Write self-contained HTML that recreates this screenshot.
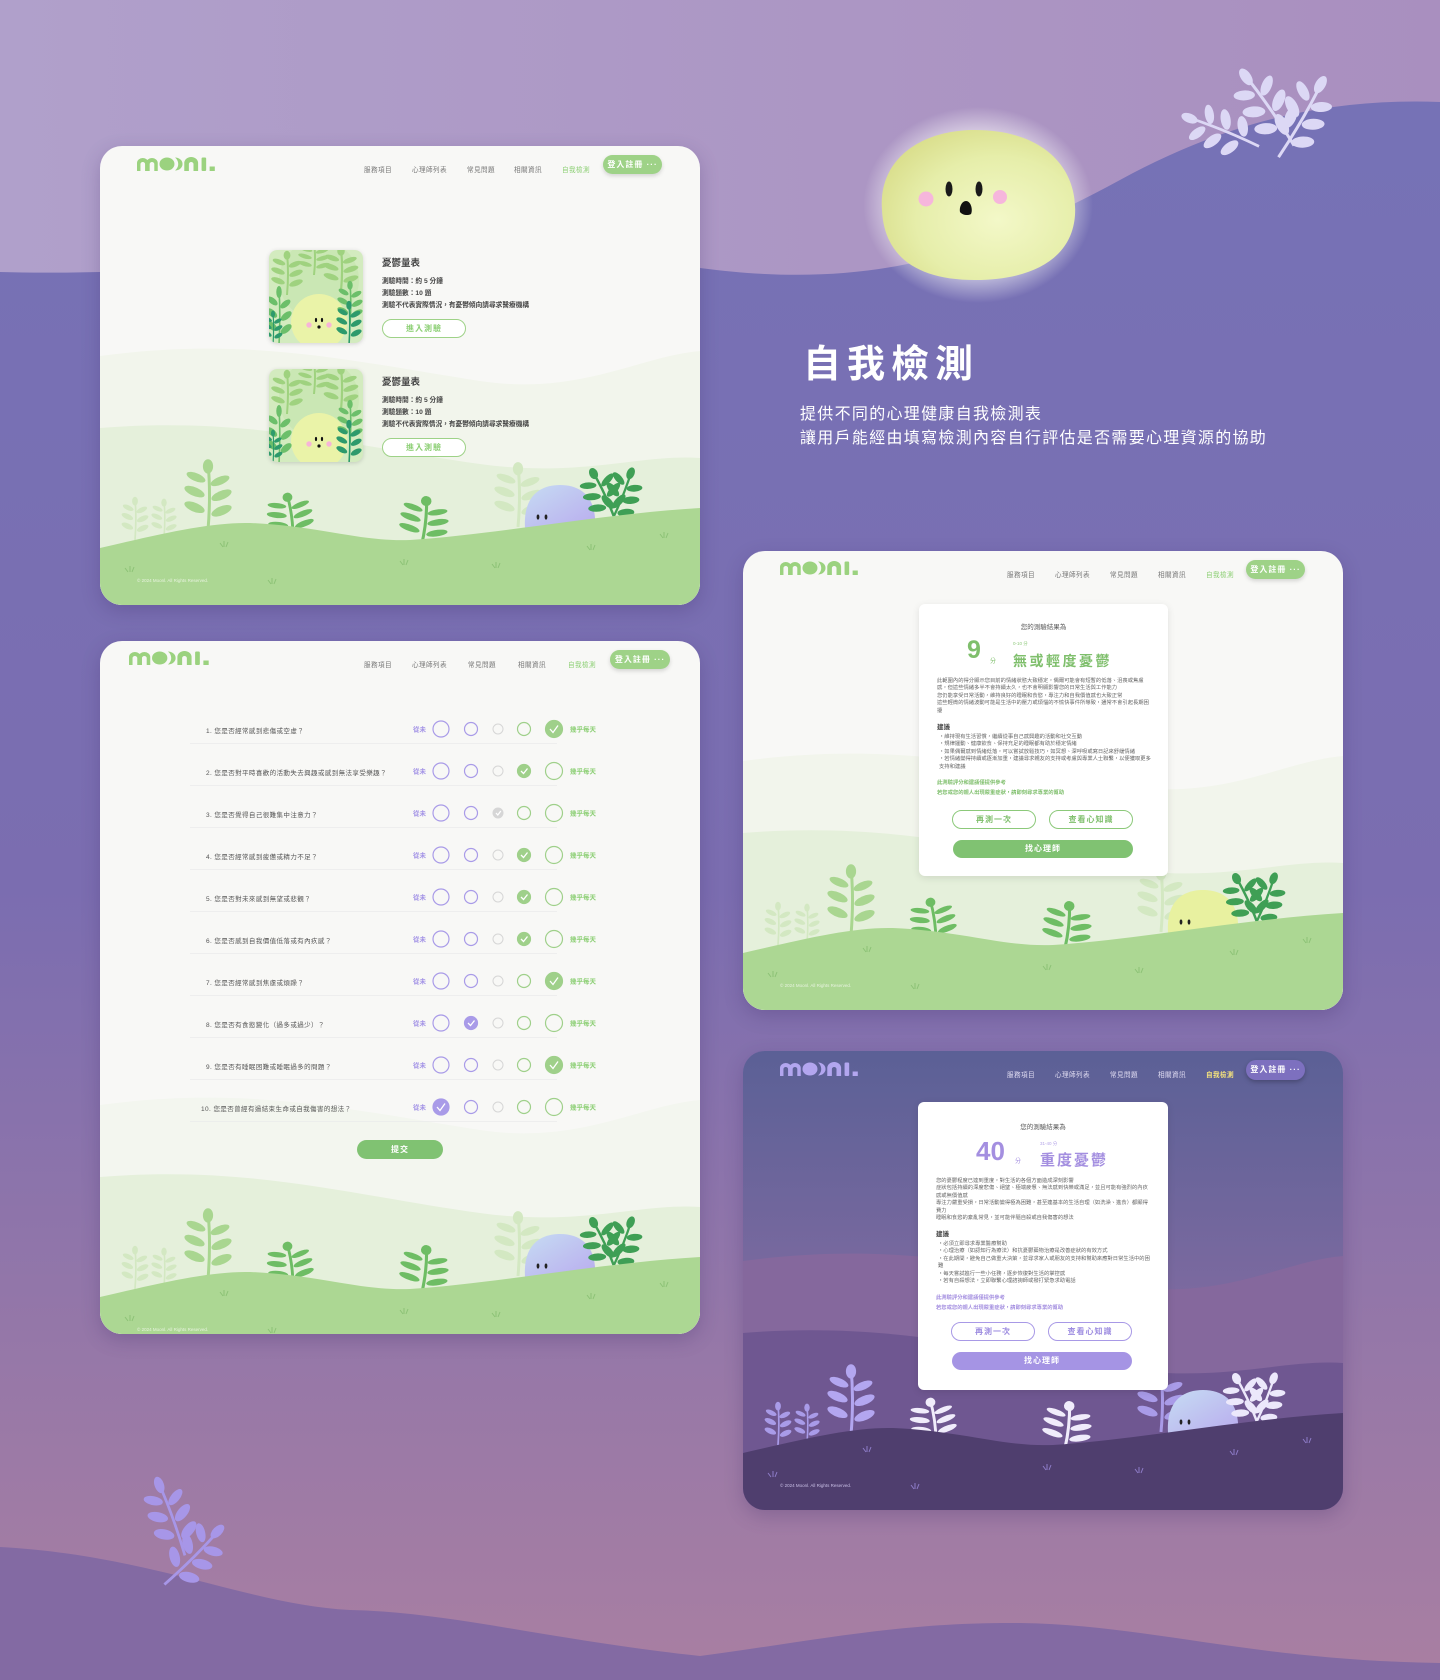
<!DOCTYPE html>
<html><head><meta charset="utf-8"><style>
*{margin:0;padding:0;box-sizing:border-box}
body{width:1440px;height:1680px;position:relative;overflow:hidden;font-family:"Liberation Sans","Noto Sans CJK TC",sans-serif;background:#7a70b2}
.abs{position:absolute}
.card{position:absolute;width:600px;border-radius:22px;overflow:hidden;background:#f8f8f6;box-shadow:0 6px 18px rgba(60,40,100,.25)}
.nav{position:absolute;top:18px;font-size:6.6px;color:#777;letter-spacing:.4px}
.btn{position:absolute;border-radius:12px;font-size:8px;font-weight:bold;color:#fff;text-align:center;letter-spacing:1px}
.q{position:absolute;left:106px;font-size:6.5px;color:#555;letter-spacing:.4px}
.box{position:absolute;background:#fff;border-radius:6px;box-shadow:0 2px 8px rgba(0,0,0,.1)}
.p{position:absolute;font-size:5.3px;line-height:7.4px;color:#666}
.ob{position:absolute;border:1.3px solid;border-radius:11px;font-size:8px;font-weight:bold;text-align:center;letter-spacing:1px;background:#fff}
.scene{position:absolute;left:0}
.g1{--w1:#f2f5ec;--w2:#e5f0db;--g:#acd793;--p1:#d3e8c2;--p2:#a9d690;--p3:#6ebd64;--p4:#3f9f55;--bl:url(#blobg);--tf:#e8f3df;--gr:#8cc276}
.g3{--w1:#f2f5ec;--w2:#e5f0db;--g:#acd793;--p1:#d3e8c2;--p2:#a9d690;--p3:#6ebd64;--p4:#3f9f55;--bl:#e8f1a0;--tf:#e8f3df;--gr:#8cc276}
.g4{--w1:#85689d;--w2:#6f5791;--g:#4f3e6e;--p1:#a99be8;--p2:#b3a6f0;--p3:#f0ecfb;--p4:#ece8fb;--bl:url(#blobg);--tf:#c9bfe6;--gr:#8e7cc8}
</style></head><body>
<svg width="0" height="0" style="position:absolute">
<defs>
<symbol id="sp" viewBox="0 0 40 60" preserveAspectRatio="none">
<path d="M20 60 Q22 30 20 4" stroke="currentColor" stroke-width="2" fill="none"/>
<g fill="currentColor">
<ellipse cx="20" cy="7" rx="3.4" ry="6"/>
<ellipse cx="12" cy="16" rx="3.2" ry="7" transform="rotate(-60 12 16)"/>
<ellipse cx="28" cy="19" rx="3.2" ry="7" transform="rotate(60 28 19)"/>
<ellipse cx="11" cy="28" rx="3.5" ry="7.5" transform="rotate(-60 11 28)"/>
<ellipse cx="29" cy="31" rx="3.5" ry="7.5" transform="rotate(60 29 31)"/>
<ellipse cx="11" cy="41" rx="3.6" ry="7.5" transform="rotate(-60 11 41)"/>
<ellipse cx="29" cy="44" rx="3.6" ry="7.5" transform="rotate(60 29 44)"/>
</g></symbol>
<symbol id="logo" viewBox="0 0 72 14" preserveAspectRatio="none">
<g fill="currentColor">
<path d="M0 14V6a5 5 0 0 1 10 0v8h-3V7a2 2 0 0 0-4 0v7zM8 14V6a5 5 0 0 1 10 0v8h-3V7a2 2 0 0 0-4 0v7z"/>
<circle cx="26" cy="7" r="6.5"/>
<path d="M33 0.5a6.5 6.5 0 0 1 0 13a9 9 0 0 0 0-13z"/>
<path d="M41 14V6a6 6 0 0 1 12 0v8h-4V7a2 2 0 0 0-4 0v7z"/>
<rect x="56" y="0.5" width="4" height="13.5" rx="1"/>
<rect x="63" y="9.5" width="4.5" height="4.5"/>
</g></symbol>
<linearGradient id="blobg" x1="0" y1="0" x2="1" y2="1"><stop offset="0" stop-color="#c6dcf3"/><stop offset="1" stop-color="#b9acee"/></linearGradient>
<symbol id="scene" viewBox="0 0 600 270">
<path d="M0 20 C150 0 250 25 380 45 C480 60 540 20 600 15 L600 270 L0 270Z" style="fill:var(--w1)"/>
<path d="M0 92 C150 80 250 110 380 128 C480 142 540 118 600 122 L600 270 L0 270Z" style="fill:var(--w2)"/>
<g style="color:var(--p1)"><use href="#sp" x="18" y="160" width="34" height="44"/><use href="#sp" x="48" y="162" width="32" height="40"/><use href="#sp" x="388" y="125" width="60" height="66"/></g>
<g style="color:var(--p2)"><use href="#sp" x="78" y="122" width="60" height="72"/></g>
<g style="color:var(--p3)"><use href="#sp" x="0" y="0" width="58" height="46" transform="translate(158 160) rotate(-8)"/><use href="#sp" x="0" y="0" width="62" height="50" transform="translate(296 156) rotate(6)"/></g>
<path d="M425 192 C423 160 440 149 460 149 C482 149 497 162 495 192Z" style="fill:var(--bl)"/>
<ellipse cx="438" cy="181" rx="1.4" ry="2.6" fill="#222"/><ellipse cx="446" cy="181" rx="1.4" ry="2.6" fill="#222"/>
<g style="color:var(--p4)"><use href="#sp" x="0" y="0" width="50" height="58" transform="translate(468 142) rotate(-25)"/><use href="#sp" x="0" y="0" width="46" height="62" transform="translate(512 122) rotate(22)"/></g>
<path d="M0 212 C60 198 110 186 150 187 C220 190 260 206 310 204 C400 198 500 178 600 172 L600 270 L0 270Z" style="fill:var(--g)"/>
<g style="stroke:var(--gr)" stroke-width="1" fill="none"><path d="M25 232l3 4M30 230v6M34 231l-2 5M168 244l3 4M172 242v6M176 243l-2 5M120 207l3 4M124 205v6M128 206l-2 5M300 225l3 4M304 223v6M308 224l-2 5M392 228l3 4M396 226v6M400 227l-2 5M487 210l3 4M491 208v6M495 209l-2 5M560 198l3 4M564 196v6M568 197l-2 5"/></g>
<text x="37" y="246" font-size="4.5" style="fill:var(--tf)" font-family="Liberation Sans">© 2024 Moonl. All Rights Reserved.</text>
</symbol>
<g id="thumb">
<rect width="94" height="93" rx="8" fill="#d3ebbf"/>
<circle cx="50" cy="30" r="40" fill="#c4e4ad" opacity=".6"/>
<circle cx="50" cy="72" r="28" fill="#eaf3a8"/>
<g color="#9fd27f"><use href="#sp" x="-2" y="0" width="40" height="45"/><use href="#sp" x="50" y="-4" width="44" height="45"/><use href="#sp" x="25" y="-10" width="40" height="35"/></g>
<g color="#6cbf6a"><use href="#sp" x="-6" y="35" width="32" height="60"/><use href="#sp" x="65" y="30" width="32" height="45"/></g>
<g color="#2d9a6c"><use href="#sp" x="64" y="50" width="32" height="45"/><use href="#sp" x="-8" y="60" width="24" height="35"/></g>
<circle cx="40" cy="75" r="2.7" fill="#f7b5d8"/><circle cx="60" cy="75" r="2.7" fill="#f7b5d8"/>
<ellipse cx="47" cy="70" rx="1.1" ry="2.1" fill="#111"/><ellipse cx="53" cy="70" rx="1.1" ry="2.1" fill="#111"/><circle cx="50" cy="77" r="1.6" fill="#111"/>
</g>
</defs></svg>

<!-- background -->
<svg class="abs" style="left:0;top:0" width="1440" height="1680">
<defs>
<linearGradient id="bgt" x1="0" y1="0" x2="1" y2="0"><stop offset="0" stop-color="#b0a0cb"/><stop offset="1" stop-color="#a98fbf"/></linearGradient>
<linearGradient id="bgm" x1="0" y1="0" x2="0" y2="1"><stop offset="0" stop-color="#7672b6"/><stop offset=".5" stop-color="#7b6db0"/><stop offset="1" stop-color="#a97fa2"/></linearGradient>
<radialGradient id="glow"><stop offset=".62" stop-color="#fff" stop-opacity=".75"/><stop offset="1" stop-color="#fff" stop-opacity="0"/></radialGradient>
<radialGradient id="moon" cx=".6" cy=".6" r=".7"><stop offset="0" stop-color="#f3f8c8"/><stop offset=".6" stop-color="#e6eeaa"/><stop offset="1" stop-color="#d8dc88"/></radialGradient>
</defs>
<rect width="1440" height="1680" fill="url(#bgt)"/>
<path d="M0 272 C200 278 480 240 700 268 C880 292 990 250 1120 180 C1230 120 1330 98 1440 102 L1440 1680 L0 1680Z" fill="url(#bgm)"/>
<path d="M0 1547 C150 1555 250 1605 350 1610 C450 1612 550 1640 700 1656 C820 1640 900 1622 1020 1623 C1150 1625 1250 1660 1440 1663 L1440 1680 L0 1680Z" fill="#836aa3"/>
<ellipse cx="978" cy="205" rx="115" ry="98" fill="url(#glow)"/>
<path d="M882 210 C878 160 920 130 975 130 C1040 130 1078 165 1075 215 C1072 260 1030 280 975 280 C915 280 884 255 882 210Z" fill="url(#moon)"/>
<ellipse cx="949" cy="189" rx="3.5" ry="7.5" fill="#1a1a1a"/>
<ellipse cx="979" cy="189" rx="3.5" ry="7.5" fill="#1a1a1a"/>
<path d="M966 201 C971 201 973 210 971 214 C968 216 962 215 960 212 C959 207 962 201 966 201Z" fill="#111"/>
<circle cx="926" cy="199" r="7.5" fill="#f6b6dc"/>
<circle cx="1000" cy="197" r="7" fill="#f6b6dc"/>
<g color="#dcd8f5">
<use href="#sp" width="60" height="95" transform="translate(1215 85) rotate(-35)"/>
<use href="#sp" width="60" height="95" transform="translate(1300 60) rotate(30)"/>
<use href="#sp" width="55" height="85" transform="translate(1170 140) rotate(-68)"/>
</g>
<g color="#a796e8">
<use href="#sp" width="55" height="85" transform="translate(130 1485) rotate(-20)"/>
<use href="#sp" width="55" height="85" transform="translate(205 1505) rotate(45)"/>
</g>
</svg>

<div class="abs" style="left:803px;top:333px;font-size:38px;font-weight:bold;color:#fff;letter-spacing:6px">自我檢測</div>
<div class="abs" style="left:800px;top:403px;font-size:16px;color:#fff;letter-spacing:1.3px;line-height:24px">提供不同的心理健康自我檢測表<br>讓用戶能經由填寫檢測內容自行評估是否需要心理資源的協助</div>

<!-- CARD 1 -->
<div class="card" style="left:100px;top:146px;height:459px">
<svg class="scene g1" style="top:190px" width="600" height="270"><use href="#scene" width="600" height="270"/></svg>
<svg class="abs" style="left:37px;top:11px;color:#9bd27f" width="83" height="14"><use href="#logo" width="83" height="14"/></svg>
<div class="nav" style="left:264px">服務項目</div><div class="nav" style="left:312px">心理師列表</div><div class="nav" style="left:367px">常見問題</div><div class="nav" style="left:414px">相關資訊</div><div class="nav" style="left:462px;color:#8ccf74">自我檢測</div>
<div class="btn" style="left:503px;top:9px;width:59px;height:19px;line-height:19px;background:#9ed287;box-shadow:0 2px 4px rgba(0,0,0,.15)">登入註冊 ···</div>

<svg class="abs" style="left:169px;top:104px;filter:drop-shadow(0 1px 2px rgba(0,0,0,.15))" width="94" height="93"><defs><clipPath id="tc1"><rect width="94" height="93" rx="8"/></clipPath></defs><g clip-path="url(#tc1)"><use href="#thumb"/></g></svg>
<div class="abs" style="left:282px;top:109px;font-size:9.5px;font-weight:bold;color:#444">憂鬱量表</div>
<div class="abs" style="left:282px;top:130px;font-size:6.7px;font-weight:bold;color:#444;line-height:11.8px">測驗時間：約 5 分鐘<br>測驗題數：10 題<br>測驗不代表實際情況，有憂鬱傾向請尋求醫療機構</div>
<div class="ob" style="left:282px;top:173px;width:84px;height:19px;line-height:17px;border-color:#9ed287;color:#8ccf74">進入測驗</div>

<svg class="abs" style="left:169px;top:223px;filter:drop-shadow(0 1px 2px rgba(0,0,0,.15))" width="94" height="93"><defs><clipPath id="tc2"><rect width="94" height="93" rx="8"/></clipPath></defs><g clip-path="url(#tc2)"><use href="#thumb"/></g></svg>
<div class="abs" style="left:282px;top:228px;font-size:9.5px;font-weight:bold;color:#444">憂鬱量表</div>
<div class="abs" style="left:282px;top:249px;font-size:6.7px;font-weight:bold;color:#444;line-height:11.8px">測驗時間：約 5 分鐘<br>測驗題數：10 題<br>測驗不代表實際情況，有憂鬱傾向請尋求醫療機構</div>
<div class="ob" style="left:282px;top:292px;width:84px;height:19px;line-height:17px;border-color:#9ed287;color:#8ccf74">進入測驗</div>
</div>

<!-- CARD 2 -->
<div class="card" style="left:100px;top:641px;height:693px">
<svg class="scene g1" style="top:444px;--w1:#f3f6ef" width="600" height="270"><use href="#scene" width="600" height="270"/></svg>
<svg class="abs" style="left:29px;top:10px;color:#9bd27f" width="85" height="14"><use href="#logo" width="85" height="14"/></svg>
<div class="nav" style="left:264px">服務項目</div><div class="nav" style="left:312px">心理師列表</div><div class="nav" style="left:368px">常見問題</div><div class="nav" style="left:418px">相關資訊</div><div class="nav" style="left:468px;color:#8ccf74">自我檢測</div>
<div class="btn" style="left:510px;top:9px;width:60px;height:19px;line-height:19px;background:#9ed287;box-shadow:0 2px 4px rgba(0,0,0,.15)">登入註冊 ···</div>

<div class="q" style="top:84px">1. 您是否經常感到悲傷或空虛？</div>
<div class="q" style="top:126px">2. 您是否對平時喜歡的活動失去興趣或感到無法享受樂趣？</div>
<div class="q" style="top:168px">3. 您是否覺得自己很難集中注意力？</div>
<div class="q" style="top:210px">4. 您是否經常感到疲憊或精力不足？</div>
<div class="q" style="top:252px">5. 您是否對未來感到無望或悲觀？</div>
<div class="q" style="top:294px">6. 您是否感到自我價值低落或有內疚感？</div>
<div class="q" style="top:336px">7. 您是否經常感到焦慮或煩躁？</div>
<div class="q" style="top:378px">8. 您是否有食慾變化（過多或過少）？</div>
<div class="q" style="top:420px">9. 您是否有睡眠困難或睡眠過多的問題？</div>
<div class="q" style="top:462px;left:101px">10. 您是否曾經有過結束生命或自我傷害的想法？</div>
<svg class="abs" style="left:0;top:0" width="600" height="520">
<defs>
<g id="row">
<text x="313" y="2.5" font-size="6.5" font-weight="bold" fill="#a393e6" font-family="Noto Sans CJK TC,sans-serif">從未</text>
<circle cx="341" cy="0" r="8" fill="none" stroke="#a99be8" stroke-width="1.2"/>
<circle cx="371" cy="0" r="6.5" fill="none" stroke="#a99be8" stroke-width="1.2"/>
<circle cx="398" cy="0" r="5" fill="none" stroke="#d6d6d6" stroke-width="1"/>
<circle cx="424" cy="0" r="6.5" fill="none" stroke="#9fd08a" stroke-width="1.2"/>
<circle cx="454" cy="0" r="8.5" fill="none" stroke="#9fd08a" stroke-width="1.2"/>
<text x="470" y="2.5" font-size="6.5" font-weight="bold" fill="#8ccf74" font-family="Noto Sans CJK TC,sans-serif">幾乎每天</text>
<rect x="90" y="14" width="367" height="0.8" fill="#ebebeb"/>
</g>
</defs>
<use href="#row" y="88"/><use href="#row" y="130"/><use href="#row" y="172"/><use href="#row" y="214"/><use href="#row" y="256"/><use href="#row" y="298"/><use href="#row" y="340"/><use href="#row" y="382"/><use href="#row" y="424"/><use href="#row" y="466"/>
<g stroke="#fff" stroke-width="1.3" fill="none">
<circle cx="454" cy="88" r="8.5" fill="#9fd08a" stroke="none"/><path d="M450 88l3 3.5 5-7"/>
<circle cx="424" cy="130" r="6.5" fill="#9fd08a" stroke="none"/><path d="M421 130l2.5 2.5 4-5"/>
<circle cx="398" cy="172" r="5" fill="#d6d6d6" stroke="none"/><path d="M396 172l1.8 2 3-4"/>
<circle cx="424" cy="214" r="6.5" fill="#9fd08a" stroke="none"/><path d="M421 214l2.5 2.5 4-5"/>
<circle cx="424" cy="256" r="6.5" fill="#9fd08a" stroke="none"/><path d="M421 256l2.5 2.5 4-5"/>
<circle cx="424" cy="298" r="6.5" fill="#9fd08a" stroke="none"/><path d="M421 298l2.5 2.5 4-5"/>
<circle cx="454" cy="340" r="8.5" fill="#9fd08a" stroke="none"/><path d="M450 340l3 3.5 5-7"/>
<circle cx="371" cy="382" r="6.5" fill="#a99be8" stroke="none"/><path d="M368 382l2.5 2.5 4-5"/>
<circle cx="454" cy="424" r="8.5" fill="#9fd08a" stroke="none"/><path d="M450 424l3 3.5 5-7"/>
<circle cx="341" cy="466" r="8" fill="#a99be8" stroke="none"/><path d="M337 466l3 3.5 5-7"/>
</g>
</svg>
<div class="btn" style="left:257px;top:499px;width:86px;height:19px;line-height:19px;background:#80c272;border-radius:10px">提交</div>
</div>

<!-- CARD 3 -->
<div class="card" style="left:743px;top:551px;height:459px">
<svg class="scene g3" style="top:190px" width="600" height="270"><use href="#scene" width="600" height="270"/></svg>
<svg class="abs" style="left:37px;top:10px;color:#9bd27f" width="83" height="14"><use href="#logo" width="83" height="14"/></svg>
<div class="nav" style="left:264px">服務項目</div><div class="nav" style="left:312px">心理師列表</div><div class="nav" style="left:367px">常見問題</div><div class="nav" style="left:415px">相關資訊</div><div class="nav" style="left:463px;color:#8ccf74">自我檢測</div>
<div class="btn" style="left:503px;top:9px;width:59px;height:19px;line-height:19px;background:#9ed287;box-shadow:0 2px 4px rgba(0,0,0,.15)">登入註冊 ···</div>

<div class="box" style="left:176px;top:53px;width:249px;height:272px">
<div class="abs" style="left:0;width:249px;top:17px;text-align:center;font-size:6.5px;color:#555">您的測驗結果為</div>
<div class="abs" style="left:48px;top:32px;font-size:25px;font-weight:bold;color:#7fbf6c">9</div>
<div class="abs" style="left:71px;top:52px;font-size:6px;color:#7fbf6c">分</div>
<div class="abs" style="left:94px;top:37px;font-size:4.5px;color:#8fc97c">0-10 分</div>
<div class="abs" style="left:94px;top:47px;font-size:14px;font-weight:bold;color:#7fbf6c;letter-spacing:2.5px">無或輕度憂鬱</div>
<div class="p" style="left:18px;top:74px;width:215px">此範圍內的得分顯示您目前的情緒狀態大致穩定，偶爾可能會有短暫的低落、沮喪或焦慮感，但這些情緒多半不會持續太久，也不會明顯影響您的日常生活與工作能力<br>您仍能享受日常活動，維持良好的睡眠和食慾，專注力和自我價值感也大致正常<br>這些輕微的情緒波動可能是生活中的壓力或煩惱的不愉快事件所導致，通常不會引起長期困擾</div>
<div class="abs" style="left:18px;top:117px;font-size:6.5px;font-weight:bold;color:#444">建議</div>
<div class="p" style="left:20px;top:130px;width:212px">・維持現有生活習慣，繼續從事自己感興趣的活動和社交互動<br>・規律運動、健康飲食、保持充足的睡眠都有助於穩定情緒<br>・如果偶爾感到情緒低落，可以嘗試放鬆技巧，如冥想、深呼吸或寫日記來舒緩情緒<br>・若情緒變得持續或逐漸加重，建議尋求親友的支持或考慮與專業人士聯繫，以便獲取更多支持和建議</div>
<div class="p" style="left:18px;top:175px;color:#7fbf6c;font-weight:bold;line-height:9.5px">此測驗評分和建議僅提供參考<br>若您或您的親人出現嚴重症狀，請即刻尋求專業的幫助</div>
<div class="ob" style="left:33px;top:206px;width:84px;height:19px;line-height:17px;border-color:#8cc97a;color:#7fbf6c">再測一次</div>
<div class="ob" style="left:130px;top:206px;width:84px;height:19px;line-height:17px;border-color:#8cc97a;color:#7fbf6c">查看心知識</div>
<div class="btn" style="left:34px;top:236px;width:180px;height:18px;line-height:18px;background:#80c272;border-radius:9px">找心理師</div>
</div>
</div>

<!-- CARD 4 -->
<div class="card" style="left:743px;top:1051px;height:459px;background:linear-gradient(#5b6096,#7d6aa0 55%,#8f73a2)">
<svg class="scene g4" style="top:190px" width="600" height="270"><use href="#scene" width="600" height="270"/></svg>
<svg class="abs" style="left:37px;top:11px;color:#b3a6ef" width="83" height="14"><use href="#logo" width="83" height="14"/></svg>
<div class="nav" style="left:264px;color:#e0dcf2">服務項目</div><div class="nav" style="left:312px;color:#e0dcf2">心理師列表</div><div class="nav" style="left:367px;color:#e0dcf2">常見問題</div><div class="nav" style="left:415px;color:#e0dcf2">相關資訊</div><div class="nav" style="left:463px;color:#f5e27c;font-weight:bold">自我檢測</div>
<div class="btn" style="left:503px;top:9px;width:59px;height:20px;line-height:20px;background:#7d70bf;box-shadow:0 2px 5px rgba(0,0,0,.25)">登入註冊 ···</div>

<div class="box" style="left:175px;top:51px;width:250px;height:288px">
<div class="abs" style="left:0;width:250px;top:19px;text-align:center;font-size:6.5px;color:#555">您的測驗結果為</div>
<div class="abs" style="left:58px;top:34px;font-size:26px;font-weight:bold;color:#a48fe0">40</div>
<div class="abs" style="left:97px;top:54px;font-size:6px;color:#a48fe0">分</div>
<div class="abs" style="left:122px;top:39px;font-size:4.5px;color:#b3a3e8">31-40 分</div>
<div class="abs" style="left:122px;top:47px;font-size:15px;font-weight:bold;color:#a48fe0;letter-spacing:2px">重度憂鬱</div>
<div class="p" style="left:18px;top:76px;width:215px">您的憂鬱程度已達到重度，對生活的各個方面造成深刻影響<br>症狀包括持續的深度悲傷、絕望、極端疲憊、無法感到快樂或滿足，並且可能有強烈的內疚感或無價值感<br>專注力嚴重受損，日常活動變得極為困難，甚至連基本的生活自理（如洗澡、進食）都顯得費力<br>睡眠和食慾的紊亂常見，並可能伴隨自殺或自我傷害的想法</div>
<div class="abs" style="left:18px;top:126px;font-size:6.5px;font-weight:bold;color:#444">建議</div>
<div class="p" style="left:20px;top:139px;width:212px">・必須立即尋求專業醫療幫助<br>・心理治療（如認知行為療法）和抗憂鬱藥物治療是改善症狀的有效方式<br>・在此期間，避免自己做重大決策，並尋求家人或朋友的支持和幫助來應對日常生活中的困難<br>・每天嘗試進行一些小任務，逐步恢復對生活的掌控感<br>・若有自殺想法，立即聯繫心理諮詢師或撥打緊急求助電話</div>
<div class="p" style="left:18px;top:191px;color:#a48fe0;font-weight:bold;line-height:10px">此測驗評分和建議僅提供參考<br>若您或您的親人出現嚴重症狀，請即刻尋求專業的幫助</div>
<div class="ob" style="left:33px;top:220px;width:84px;height:19px;line-height:17px;border-color:#a899e6;color:#9d8ce0">再測一次</div>
<div class="ob" style="left:130px;top:220px;width:84px;height:19px;line-height:17px;border-color:#a899e6;color:#9d8ce0">查看心知識</div>
<div class="btn" style="left:34px;top:250px;width:180px;height:18px;line-height:18px;background:#a594e4;border-radius:9px">找心理師</div>
</div>
</div>
</body></html>
